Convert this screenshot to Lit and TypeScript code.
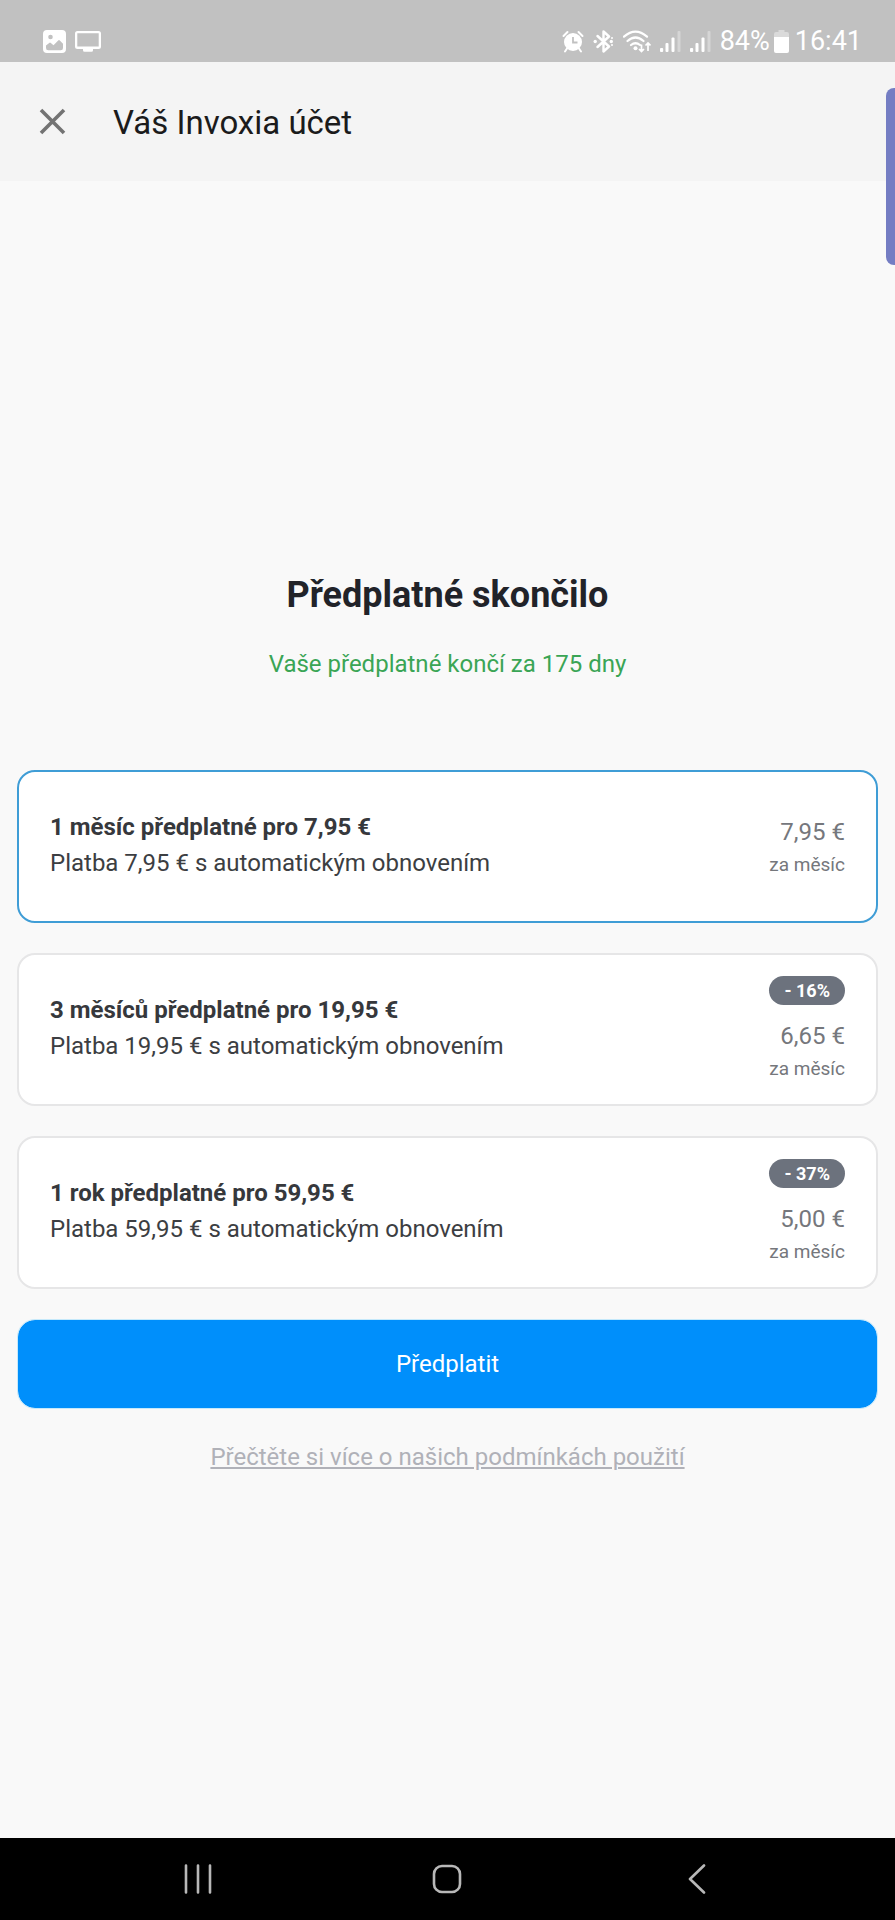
import { LitElement, html, css, svg, nothing } from "lit";
import { customElement, property, state } from "lit/decorators.js";

interface Plan {
  id: string;
  title: string;
  detail: string;
  monthly: string;
  discount?: string;
}

const PLANS: Plan[] = [
  { id: "month", title: "1 měsíc předplatné pro 7,95 €", detail: "Platba 7,95 € s automatickým obnovením", monthly: "7,95 €" },
  { id: "quarter", title: "3 měsíců předplatné pro 19,95 €", detail: "Platba 19,95 € s automatickým obnovením", monthly: "6,65 €", discount: "- 16%" },
  { id: "year", title: "1 rok předplatné pro 59,95 €", detail: "Platba 59,95 € s automatickým obnovením", monthly: "5,00 €", discount: "- 37%" },
];

const signal = svg`
  <rect x="0" y="17" width="3.200" height="4" rx="1"/>
  <rect x="5.500" y="12" width="3" height="9" rx="1"/>
  <rect x="11.500" y="6.500" width="3" height="14.500" rx="1"/>
  <rect x="17.500" y="0" width="3" height="21" rx="1" opacity=".35"/>`;

@customElement("status-bar")
export class StatusBar extends LitElement {
  static styles = css`
    :host {
      display: flex;
      justify-content: space-between;
      align-items: flex-end;
      height: 62px;
      padding: 0 33px 6px 43px;
      box-sizing: border-box;
      background: #c1c1c1;
      color: #fff;
      font-size: 27px;
      line-height: 30px;
    }
    .group { display: flex; align-items: center; gap: 9px; height: 30px; }
    .level { display: flex; align-items: center; }
    .battery { margin: 0 6px 0 4px; }
    svg { display: block; fill: #fff; }
  `;

  render() {
    return html`
      <div class="group">
        <svg width="23" height="23" viewBox="0 0 23 23" aria-hidden="true">
          <path fill-rule="evenodd" d="M4 0h15a4 4 0 0 1 4 4v15a4 4 0 0 1-4 4H4a4 4 0 0 1-4-4V4a4 4 0 0 1 4-4zM7.500 4.700a2.300 2.300 0 1 0 0 4.600 2.300 2.300 0 0 0 0-4.600zM3 15.500V18q0 2.300 2.300 2.300h12.400q2.300 0 2.300-2.300v-4.200l-3.200-3.300q-.8-.8-1.600 0l-4.700 4.700-2.700-2.300q-.8-.6-1.600 0z"/>
        </svg>
        <svg width="26" height="23" viewBox="0 0 26 23" aria-hidden="true">
          <path fill-rule="evenodd" d="M2.500 1h21A2.500 2.500 0 0 1 26 3.500v13a2.500 2.500 0 0 1-2.500 2.500H18v1.200q0 1.500-1.500 1.500h-7Q8 21.700 8 20.200V19H2.500A2.500 2.500 0 0 1 0 16.500v-13A2.500 2.500 0 0 1 2.500 1zM2.300 3.300v13.200h21.400V3.300z"/>
        </svg>
      </div>
      <div class="group">
        <svg width="22" height="23" viewBox="0 0 22 23" aria-hidden="true">
          <path d="M1.500 6 5.500 2M16.500 2l4 4M5 18.500l-2 3M17 18.500l2 3" stroke="#fff" stroke-width="2" stroke-linecap="round"/>
          <circle cx="11" cy="12" r="9"/>
          <path d="M11 7v5.500h4.500" fill="none" stroke="#c1c1c1" stroke-width="1.800"/>
        </svg>
        <svg width="21" height="23" viewBox="0 0 21 23" aria-hidden="true">
          <path d="M4.500 6 16 16.500 10.500 21.500V1.500L16 6.500 4.500 17" fill="none" stroke="#fff" stroke-width="2.400" stroke-linejoin="round" stroke-linecap="round"/>
          <circle cx="2.200" cy="11.500" r="1.700"/><circle cx="18.300" cy="11.500" r="1.700"/>
          <circle cx="19" cy="8" r="1"/><circle cx="19" cy="15" r="1"/>
        </svg>
        <svg width="28" height="23" viewBox="1 0 28 23" aria-hidden="true">
          <g fill="none" stroke="#fff" stroke-width="2.200" stroke-linecap="round">
            <path d="M2 6.700q11.500-10 23 0M5.500 11q8-7 16 0M9 15q4.500-3.500 9 0"/>
          </g>
          <circle cx="13.500" cy="18.300" r="2"/>
          <path d="M19.500 14.500v7M17 19l2.500 2.500L22 19M26 21V13M23.500 15.500 26 13l2.500 2.500" fill="none" stroke="#fff" stroke-width="1.700"/>
        </svg>
        <svg width="21" height="21" viewBox="0 0 21 21" aria-hidden="true">${signal}</svg>
        <svg width="21" height="21" viewBox="0 0 21 21" aria-hidden="true">${signal}</svg>
        <span class="level">
          <span>84%</span>
          <svg class="battery" width="15" height="23" viewBox="0 0 15 23" aria-hidden="true">
            <path d="M4.500 0h6v2H13a2 2 0 0 1 2 2v3H0V4a2 2 0 0 1 2-2h2.500z" opacity=".4"/>
            <path d="M0 7h15v14a2 2 0 0 1-2 2H2a2 2 0 0 1-2-2z"/>
          </svg>
          <span>16:41</span>
        </span>
      </div>
    `;
  }
}

@customElement("plan-option")
export class PlanOption extends LitElement {
  @property({ attribute: false }) plan!: Plan;
  @property({ type: Boolean }) selected = false;

  static styles = css`
    :host { display: block; }
    .card {
      display: flex;
      position: relative;
      justify-content: space-between;
      align-items: center;
      gap: 24px;
      min-height: 153px;
      padding: 0 31px;
      box-sizing: border-box;
      border: 2px solid #e6e6e7;
      border-radius: 18px;
      background: #fff;
      cursor: pointer;
    }
    .card.selected { border-color: #3f9dd6; }
    .radio {
      position: absolute;
      width: 1px;
      height: 1px;
      margin: 0;
      opacity: 0;
      pointer-events: none;
    }
    .text { display: block; padding-bottom: 3px; font-size: 24px; line-height: 36px; color: #3c3e42; }
    .title { display: block; font-weight: 700; color: #36383c; }
    .detail { display: block; }
    .price {
      display: flex;
      flex-direction: column;
      align-items: flex-end;
      flex: none;
      color: #75777c;
      font-size: 24px;
      line-height: 36px;
    }
    .badge {
      margin-bottom: 13px;
      padding: 0 15px;
      border-radius: 15px;
      background: #6c727d;
      color: #fff;
      font-size: 18px;
      font-weight: 700;
      line-height: 29px;
    }
    .per { font-size: 19px; line-height: 30px; }
  `;

  private choose() {
    this.dispatchEvent(new CustomEvent("choose", { detail: this.plan.id }));
  }

  render() {
    const p = this.plan;
    return html`
      <label class="card ${this.selected ? "selected" : ""}">
        <input class="radio" type="radio" name="plan" .value=${p.id} .checked=${this.selected} @change=${this.choose} />
        <span class="text">
          <span class="title">${p.title}</span>
          <span class="detail">${p.detail}</span>
        </span>
        <span class="price">
          ${p.discount ? html`<span class="badge">${p.discount}</span>` : nothing}
          <span>${p.monthly}</span>
          <span class="per">za měsíc</span>
        </span>
      </label>
    `;
  }
}

@customElement("app-root")
export class AppRoot extends LitElement {
  @state() private selected = "month";

  static styles = css`
    :host {
      display: flex;
      flex-direction: column;
      position: relative;
      min-height: 100vh;
      background: #f9f9f9;
      font-family: Roboto, "Liberation Sans", sans-serif;
    }
    button { border: 0; padding: 0; background: none; font: inherit; cursor: pointer; }
    svg { display: block; }
    .header {
      display: flex;
      align-items: center;
      gap: 34px;
      height: 119px;
      padding: 0 26px;
      background: #f4f4f4;
    }
    .close { padding: 13px; }
    .header-title { margin: 0; padding-top: 2px; font-size: 33px; font-weight: 400; line-height: 40px; color: #1b1b1b; }
    .edge-handle {
      position: absolute;
      top: 88px;
      right: 0;
      width: 9px;
      height: 177px;
      border-radius: 8px 0 0 8px;
      background: #747dc3;
    }
    .main {
      display: flex;
      flex-direction: column;
      flex: 1;
      padding: 391px 17px 40px;
    }
    .title { margin: 0; text-align: center; font-size: 36px; font-weight: 700; line-height: 46px; color: #212329; }
    .notice { margin: 28px 0 0; text-align: center; font-size: 24px; line-height: 36px; color: #3aa555; }
    .plans { display: grid; gap: 30px; margin-top: 88px; }
    .subscribe {
      margin-top: 30px;
      min-height: 90px;
      border: 1px solid #c5e9fb;
      border-radius: 18px;
      background: #008ffb;
      background-clip: padding-box;
      color: #fff;
      font-size: 24px;
      line-height: 36px;
    }
    .terms {
      align-self: center;
      margin-top: 30px;
      font-size: 24px;
      line-height: 36px;
      color: #b0b1b8;
      text-decoration-thickness: 2px;
      text-underline-offset: 2px;
    }
    .nav {
      display: flex;
      justify-content: space-around;
      align-items: center;
      height: 82px;
      padding: 0 73px;
      background: #000;
    }
    .nav button { display: grid; place-items: center; width: 60px; height: 60px; }
  `;

  render() {
    return html`
      <status-bar></status-bar>
      <header class="header">
        <button class="close" aria-label="Zavřít">
          <svg width="27" height="27" viewBox="0 0 27 27"><path d="M2 2 25 25M25 2 2 25" stroke="#737373" stroke-width="3.600"/></svg>
        </button>
        <h1 class="header-title">Váš Invoxia účet</h1>
      </header>
      <div class="edge-handle"></div>
      <main class="main">
        <h2 class="title">Předplatné skončilo</h2>
        <p class="notice">Vaše předplatné končí za 175 dny</p>
        <div class="plans" role="radiogroup" aria-label="Předplatné">
          ${PLANS.map(
            (p) => html`<plan-option
              .plan=${p}
              .selected=${this.selected === p.id}
              @choose=${(e: CustomEvent<string>) => (this.selected = e.detail)}
            ></plan-option>`,
          )}
        </div>
        <button class="subscribe">Předplatit</button>
        <a class="terms" href="#">Přečtěte si více o našich podmínkách použití</a>
      </main>
      <nav class="nav">
        <button aria-label="Poslední aplikace">
          <svg width="28" height="30" viewBox="0 0 28 30"><path d="M2 1.500v27M14 1.500v27M26 1.500v27" stroke="#b8b8b8" stroke-width="2.600" stroke-linecap="round"/></svg>
        </button>
        <button aria-label="Domů">
          <svg width="30" height="30" viewBox="0 0 30 30"><rect x="2" y="2" width="26" height="26" rx="8" fill="none" stroke="#b8b8b8" stroke-width="2.600"/></svg>
        </button>
        <button aria-label="Zpět">
          <svg width="18" height="30" viewBox="0 0 18 30"><path d="M16 1.500 2 15 16 28.500" fill="none" stroke="#b8b8b8" stroke-width="2.600" stroke-linecap="round" stroke-linejoin="round"/></svg>
        </button>
      </nav>
    `;
  }
}
